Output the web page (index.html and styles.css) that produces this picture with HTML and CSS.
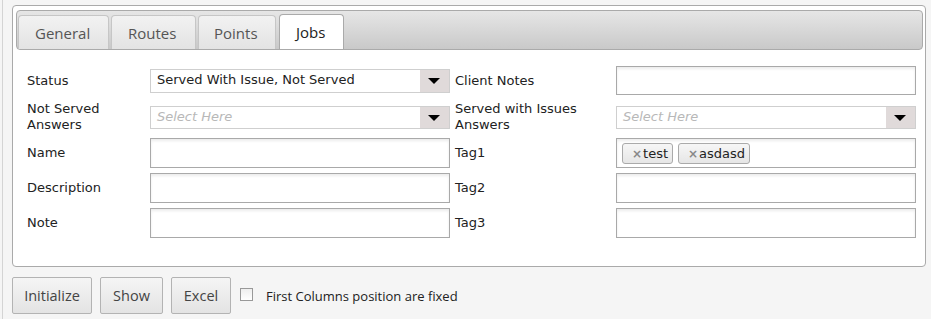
FILE: index.html
```html
<!DOCTYPE html>
<html lang="en">
<head>
  <meta charset="UTF-8">
  <title>Jobs</title>
  <link rel="stylesheet" href="styles.css">
</head>
<body>
  <div class="page">
    <div class="panel">
      <div class="tabbar">
        <div class="tab">General</div>
        <div class="tab">Routes</div>
        <div class="tab">Points</div>
        <div class="tab active">Jobs</div>
      </div>
      <div class="form">
        <label class="lbl first">Status</label>
        <div class="select first"><span class="val">Served With Issue, Not Served</span><span class="arrow"></span></div>
        <label class="lbl right first">Client Notes</label>
        <div class="input first short"></div>

        <label class="lbl">Not Served<br>Answers</label>
        <div class="select"><span class="val ph">Select Here</span><span class="arrow"></span></div>
        <label class="lbl right">Served with Issues<br>Answers</label>
        <div class="select"><span class="val ph">Select Here</span><span class="arrow"></span></div>

        <label class="lbl">Name</label>
        <div class="input"></div>
        <label class="lbl right">Tag1</label>
        <div class="input tags">
          <span class="chip"><b>×</b>test</span>
          <span class="chip"><b>×</b>asdasd</span>
        </div>

        <label class="lbl">Description</label>
        <div class="input"></div>
        <label class="lbl right">Tag2</label>
        <div class="input"></div>

        <label class="lbl">Note</label>
        <div class="input"></div>
        <label class="lbl right">Tag3</label>
        <div class="input"></div>
      </div>
    </div>
    <div class="actions">
      <button class="btn btn-init">Initialize</button>
      <button class="btn btn-show">Show</button>
      <button class="btn btn-excel">Excel</button>
      <span class="check"></span>
      <span class="checklbl">First Columns position are fixed</span>
    </div>
  </div>
</body>
</html>
```
FILE: styles.css
```css
body{
  margin: 0;
  background: #f5f5f5;
  font-family: "DejaVu Sans", Verdana, sans-serif;
}
.page{
  margin-left: 2px;
  border-left: 1px solid #d4d4d4;
  height: 319px;
  padding: 5px 0 0 9px;
  box-sizing: border-box;
}
.panel{
  width: 914px;
  height: 262px;
  box-sizing: border-box;
  background: #fff;
  border: 1px solid #aaaaaa;
  border-radius: 4px;
  padding: 4px 2px 0 3px;
}
.tabbar{
  height: 40px;
  box-sizing: border-box;
  border: 1px solid #aaaaaa;
  border-radius: 4px;
  background: linear-gradient(#e6e6e6, #c9c9c9);
  display: flex;
  align-items: flex-end;
  padding-left: 1px;
  gap: 2px;
}
.tab{
  height: 34px;
  box-sizing: border-box;
  padding: 0 16px;
  border: 1px solid #c6c6c6;
  border-bottom: none;
  border-radius: 4px 4px 0 0;
  background: linear-gradient(#f2f2f2, #e3e3e3);
  font-family: "Open Sans", "Noto Sans", sans-serif;
  font-size: 15px;
  color: #555;
  line-height: 34px;
}
.tab:nth-child(1){ width: 91px; }
.tab:nth-child(2){ width: 85px; }
.tab:nth-child(3){ width: 78px; padding: 0 15px; }
.tab.active{
  width: 65px;
  height: 35px;
  background: #fff;
  border-color: #aaaaaa;
  color: #222;
  margin-left: 1px;
}
.form{
  display: grid;
  grid-template-columns: 123px 300px 166px 300px;
  grid-template-rows: 27px 32px 30px 30px 30px;
  row-gap: 5px;
  align-items: center;
  padding: 19px 0 0 11px;
}
.lbl{
  font-size: 13px;
  color: #222;
  line-height: 16px;
}
.lbl.right{ padding-left: 5px; }
.first{ align-self: start; }
.lbl.first{ line-height: 24px; }
.select{
  height: 23px;
  box-sizing: border-box;
  border: 1px solid #cfcfcf;
  display: flex;
  background: #fff;
}
.select .val{
  flex: 1;
  font-size: 13px;
  color: #222;
  padding-left: 6px;
  line-height: 20px;
}
.select .val.ph{
  font-style: italic;
  color: #b8b8b8;
}
.select .arrow{
  width: 29px;
  background: #e0dada;
  position: relative;
}
.select .arrow::after{
  content: "";
  position: absolute;
  left: 8px;
  top: 8px;
  border-left: 6px solid transparent;
  border-right: 6px solid transparent;
  border-top: 6px solid #000;
}
.select.first{ height: 24px; }
.input{
  height: 30px;
  box-sizing: border-box;
  border: 1px solid #a9a9a9;
  background: #fff;
  box-shadow: inset 0 2px 3px rgba(0,0,0,0.08);
}
.input.short{ height: 29px; margin-top: -3px; }
.tags{
  display: flex;
  align-items: center;
  gap: 5px;
  padding-left: 5px;
}
.chip{
  height: 21px;
  box-sizing: border-box;
  border: 1px solid #aaaaaa;
  border-radius: 3px;
  background: linear-gradient(#f6f6f6, #e6e6e6);
  font-size: 13px;
  color: #222;
  line-height: 19px;
  padding: 0 4px 0 9px;
}
.chip b{
  font-size: 12px;
  color: #888;
  margin-right: 1px;
}
.actions{
  display: flex;
  align-items: center;
  margin-top: 10px;
}
.btn{
  height: 37px;
  border: 1px solid #b3b3b3;
  border-radius: 2px;
  background: linear-gradient(#f5f5f5, #e3e3e3);
  font-family: "Open Sans", "Noto Sans", sans-serif;
  font-size: 14.5px;
  color: #444;
  margin-right: 8px;
  padding: 0;
}
.btn-init{ width: 80px; }
.btn-show{ width: 63px; }
.btn-excel{ width: 60px; }
.check{
  width: 11px;
  height: 11px;
  border: 1px solid #999;
  background: linear-gradient(#eee, #fff);
  margin-left: 1px;
  margin-top: -3px;
}
.checklbl{
  font-family: "Open Sans", "Noto Sans", sans-serif;
  font-size: 13px;
  color: #222;
  margin-left: 13px;
}
```
